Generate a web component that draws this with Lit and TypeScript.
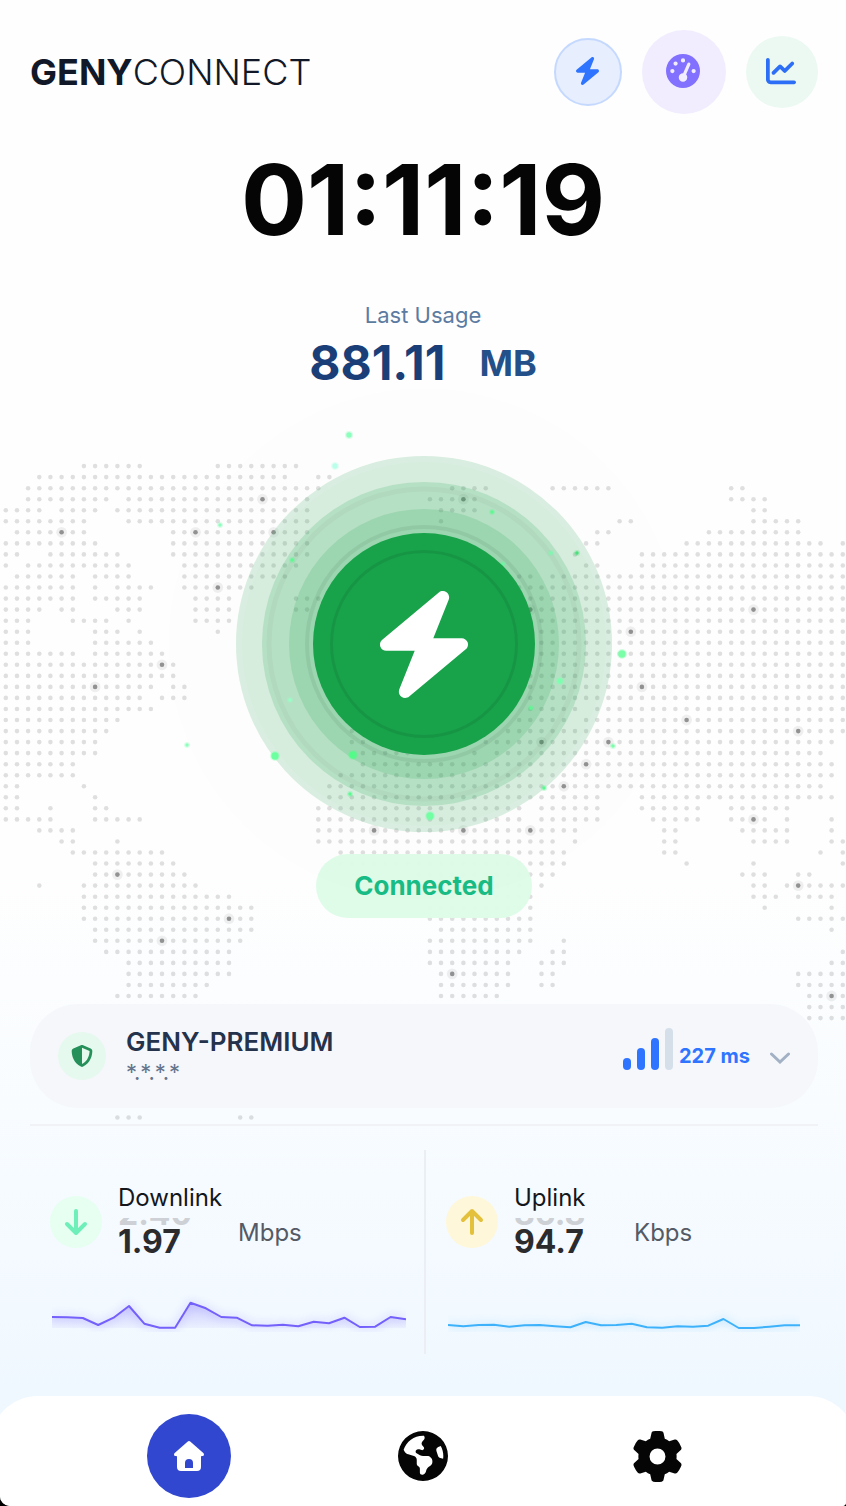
import { LitElement, html, svg, css } from "lit";
import { customElement, property } from "lit/decorators.js";

// Filled column ranges of the dotted world map, one string per row
const MAP_ROWS: Record<number, string> = {
    0: "7-12 19-26",
    1: "3-25 28-29",
    2: "2-28 40-43 49-54 65-66",
    3: "2-9 11-27 38-42 65-68",
    4: "0-3 5-8 10-27 39-42 67-68",
    5: "0-7 11-27 39 55-56 67-71",
    6: "1-7 15-27 53-54 63-71",
    7: "0-8 15-27 52-53 61-73 75",
    8: "0-1 4-10 15-27 51 57-75",
    9: "0 2-11 16-26 52-53 57-75",
    10: "1-6 8-11 16-25 46-47 49-75",
    11: "0-6 8 10-13 16-22 46-75",
    12: "0-6 8-12 17-20 26-28 46-75",
    13: "0-3 5-6 10-12 17-20 26-27 46-75",
    14: "0-2 6-9 11 17-20 47-75",
    15: "0-2 8-10 12 19 47-75",
    16: "0-2 8-13 47-75",
    17: "0-6 8-14 47-75",
    18: "0-15 47-75",
    19: "0-15 47-75",
    20: "0-13 15-16 47-75",
    21: "0-12 14-16 47-75",
    22: "0-13 47-51 53-75",
    23: "0-10 46-50 52-75",
    24: "0-9 31 45-75",
    25: "0-8 31-32 43-74",
    26: "0-8 32-36 42 44-73",
    27: "0-6 32-74",
    28: "0-6 30-74",
    29: "0-1 7 29-73",
    30: "0-1 8 29-53 57-74",
    31: "0-1 4 8-9 28-46 48-53 57-62 65-70",
    32: "0-4 8-12 28-46 48-53 58-62 65-68 70 74",
    33: "3-6 28-51 59-60 66-70 74",
    34: "5-6 10 28-49 51 59-60 67-70 74-75",
    35: "6-14 30-50 59-60 73 75",
    36: "8-15 30-50 61 67 75",
    37: "8-16 37-49 66-68 71-72",
    38: "3 7-17 37-46 48 67-68 70-75",
    39: "7-20 38-47 67-69 71-74",
    40: "7-22 38-47 68 74",
    41: "7-22 38-47 71-75",
    42: "8-22 39-47 74",
    43: "8-21 38-47 50",
    44: "9-20 38-46 49-50 75",
    45: "11-20 38-45 48-50 74-75",
    46: "11-20 39-45 48-49 71-75",
    47: "11-18 39-45 48-49 71-75",
    48: "10-17 39-44 72-75",
    49: "72-75",
    50: "72-75",
    59: "10-12 21-22",
};

// Server locations: column, row
const NODES = [
    [23, 3], [41, 3], [5, 6], [17, 6], [24, 6], [19, 11], [47, 13], [67, 13],
    [56, 15], [14, 18], [8, 20], [57, 20], [61, 23], [71, 24], [48, 25],
    [54, 25], [52, 27], [50, 29], [67, 32], [33, 33], [41, 33], [47, 33],
    [10, 37], [71, 38], [20, 41], [14, 43], [40, 46], [74, 48],
];

// Particles around the power button: x, y, radius, colour
const PARTICLES: [number, number, number, string][] = [
    [-75, -209, 3, "#8dffbd"],
    [-89, -178, 3, "#b9ffe9"],
    [-204, -119, 2, "#8dffbd"],
    [68, -132, 2, "#5dfa92"],
    [-132, -84, 2, "#5dfa92"],
    [79, -80, 2, "#6ef5a4"],
    [127, -91, 2, "#7cf8b0"],
    [153, -91, 2, "#4be07c"],
    [198, 10, 4, "#7affa8"],
    [136, 37, 3, "#7dffb0"],
    [107, 64, 2, "#5dfa92"],
    [-134, 56, 2, "#96ffc6"],
    [-149, 112, 4, "#6cffa0"],
    [-71, 111, 4, "#55fb88"],
    [-74, 150, 2, "#5dfa92"],
    [6, 172, 4, "#72ffa4"],
    [120, 144, 2, "#5dfa92"],
    [189, 102, 2, "#7affa8"],
    [-237, 101, 2, "#8dffbd"],
];

const BOLT =
    "M338.8-9.9c11.9 8.6 16.3 24.2 10.9 37.8L271.3 224 416 224c13.5 0 25.5 8.4 30.1 21.1s.7 26.9-9.6 35.5l-288 240c-11.3 9.4-27.4 9.9-39.3 1.3s-16.3-24.2-10.9-37.8L176.7 288 32 288c-13.5 0-25.5-8.4-30.1-21.1s-.7-26.9 9.6-35.5l288-240c11.3-9.4 27.4-9.9 39.3-1.3z";
const GAUGE =
    "M0 256a256 256 0 1 1 512 0A256 256 0 1 1 0 256zM288 96a32 32 0 1 0 -64 0 32 32 0 1 0 64 0zM256 416c35.3 0 64-28.7 64-64c0-17.4-6.9-33.1-18.1-44.6L366 161.7c5.3-12.1-.2-26.3-12.3-31.6s-26.3 .2-31.6 12.3L257.9 288c-.6 0-1.3 0-1.9 0c-35.3 0-64 28.7-64 64s28.7 64 64 64zM176 144a32 32 0 1 0 -64 0 32 32 0 1 0 64 0zM96 288a32 32 0 1 0 0-64 32 32 0 1 0 0 64zm352-32a32 32 0 1 0 -64 0 32 32 0 1 0 64 0z";
const CHART =
    "M64 64c0-17.7-14.3-32-32-32S0 46.3 0 64V400c0 44.2 35.8 80 80 80H480c17.7 0 32-14.3 32-32s-14.3-32-32-32H80c-8.8 0-16-7.2-16-16V64zm406.6 86.6c12.5-12.5 12.5-32.8 0-45.3s-32.8-12.5-45.3 0L320 210.7l-57.4-57.4c-12.5-12.5-32.8-12.5-45.3 0l-112 112c-12.5 12.5-12.5 32.8 0 45.3s32.8 12.5 45.3 0L240 221.3l57.4 57.4c12.5 12.5 32.8 12.5 45.3 0l128-128z";
const SHIELD =
    "M256 0c4.6 0 9.2 1 13.4 2.9L457.7 82.8c22 9.3 38.4 31 38.3 57.2c-.5 99.2-41.3 280.7-213.6 363.2c-16.7 8-36.1 8-52.8 0C57.3 420.7 16.5 239.2 16 140c-.1-26.2 16.3-47.9 38.3-57.2L242.7 2.9C246.8 1 251.4 0 256 0zm0 66.8V444.8C394 378 431.1 230.1 432 141.4L256 66.8l0 0z";
const GLOBE =
    "M57.7 193l9.4 16.4c8.3 14.5 21.9 25.2 38 29.8L163 255.7c17.2 4.9 29 20.6 29 38.5v39.9c0 11 6.2 21 16 25.9s16 14.9 16 25.9v39c0 15.6 14.9 26.9 29.9 22.6c16.1-4.6 28.6-17.5 32.7-33.8l2.8-11.2c4.2-16.9 15.2-31.4 30.3-40l8.1-4.6c15-8.5 24.2-24.5 24.2-41.7v-8.3c0-12.7-5.1-24.9-14.1-33.9l-3.9-3.9c-9-9-21.2-14.1-33.9-14.1H257c-11.1 0-22.1-2.9-31.8-8.4l-34.5-19.7c-4.3-2.5-7.6-6.5-9.2-11.2c-3.2-9.6 1.1-20 10.2-24.5l5.9-3c6.6-3.3 14.3-3.9 21.3-1.5l23.2 7.7c8.2 2.7 17.2-.4 21.9-7.5c4.7-7 4.2-16.3-1.2-22.8l-13.6-16.3c-10-12-9.9-29.5 .3-41.3l15.7-18.3c8.8-10.3 10.2-25 3.5-36.7l-2.4-4.2c-3.5-.2-6.9-.3-10.4-.3C163.1 48 84.4 108.9 57.7 193zM464 256c0-36.8-9.6-71.4-26.4-101.5L412 164.8c-15.7 6.3-23.8 23.8-18.5 39.8l16.9 50.7c3.5 10.4 12 18.3 22.6 20.9l29.1 7.3c1.2-9 1.8-18.2 1.8-27.5zM0 256a256 256 0 1 1 512 0A256 256 0 1 1 0 256z";
const GEAR =
    "M495.9 166.6c3.2 8.7 .5 18.4-6.4 24.6l-43.3 39.4c1.1 8.3 1.7 16.8 1.7 25.4s-.6 17.1-1.7 25.4l43.3 39.4c6.9 6.2 9.6 15.9 6.4 24.6c-4.4 11.9-9.7 23.3-15.8 34.3l-4.7 8.1c-6.6 11-14 21.4-22.1 31.2c-5.9 7.2-15.7 9.6-24.5 6.8l-55.7-17.7c-13.4 10.3-28.2 18.9-44 25.4l-12.5 57.1c-2 9.1-9 16.3-18.2 17.8c-13.8 2.3-28 3.5-42.5 3.5s-28.7-1.2-42.5-3.5c-9.2-1.5-16.2-8.7-18.2-17.8l-12.5-57.1c-15.8-6.5-30.6-15.1-44-25.4L83.1 425.9c-8.8 2.8-18.6 .3-24.5-6.8c-8.1-9.8-15.5-20.2-22.1-31.2l-4.7-8.1c-6.1-11-11.4-22.4-15.8-34.3c-3.2-8.7-.5-18.4 6.4-24.6l43.3-39.4C64.6 273.1 64 264.6 64 256s.6-17.1 1.7-25.4L22.4 191.2c-6.9-6.2-9.6-15.9-6.4-24.6c4.4-11.9 9.7-23.3 15.8-34.3l4.7-8.1c6.6-11 14-21.4 22.1-31.2c5.9-7.2 15.7-9.6 24.5-6.8l55.7 17.7c13.4-10.3 28.2-18.9 44-25.4l12.5-57.1c2-9.1 9-16.3 18.2-17.8C227.3 1.2 241.5 0 256 0s28.7 1.2 42.5 3.5c9.2 1.5 16.2 8.7 18.2 17.8l12.5 57.1c15.8 6.5 30.6 15.1 44 25.4l55.7-17.7c8.8-2.8 18.6-.3 24.5 6.8c8.1 9.8 15.5 20.2 22.1 31.2l4.7 8.1c6.1 11 11.4 22.4 15.8 34.3zM256 336a80 80 0 1 0 0-160 80 80 0 1 0 0 160z";

@customElement("world-map")
export class WorldMap extends LitElement {
    static styles = css`
        :host {
            display: block;
        }

        svg {
            display: block;
            width: 100%;
        }

        .dot {
            fill: rgba(0, 0, 0, 0.12);
        }

        .halo {
            fill: rgba(0, 0, 0, 0.06);
        }

        .node {
            fill: rgba(0, 0, 0, 0.3);
        }
    `;

    render() {
        const dots: unknown[] = [];
        for (const [row, ranges] of Object.entries(MAP_ROWS)) {
            for (const range of ranges.split(" ")) {
                const [from, to = from] = range.split("-").map(Number);
                for (let col = from; col <= to; col++) {
                    dots.push(
                        svg`<circle class="dot" cx=${this.x(col)} cy=${this.y(+row)} r="2.3" />`
                    );
                }
            }
        }

        return html`
            <svg viewBox="0 0 846 680" aria-hidden="true">
                ${dots}
                ${NODES.map(
                    ([col, row]) => svg`
                        <circle class="halo" cx=${this.x(col)} cy=${this.y(row)} r="5.4" />
                        <circle class="node" cx=${this.x(col)} cy=${this.y(row)} r="2.3" />
                    `
                )}
            </svg>
        `;
    }

    private x(col: number) {
        return (5.8 + col * 11.16).toFixed(1);
    }

    private y(row: number) {
        return (10.1 + row * 11.04).toFixed(1);
    }
}

@customElement("speed-card")
export class SpeedCard extends LitElement {
    static styles = css`
        :host {
            display: block;
        }

        .top {
            display: flex;
            align-items: center;
            gap: 16px;
            height: 80px;
            margin-top: 32px;
        }

        .badge {
            display: grid;
            place-items: center;
            width: 52px;
            height: 52px;
            border-radius: 50%;
            background: #e6fff0;
            color: #6eeeb9;
        }

        .up .badge {
            background: #fff7d9;
            color: #e3c13c;
        }

        .text {
            padding-bottom: 6px;
        }

        .label {
            margin-bottom: 4px;
            font-size: 24px;
            line-height: 32px;
            color: #14171c;
        }

        .reading {
            display: flex;
            align-items: flex-start;
        }

        .roller {
            display: flex;
            flex-direction: column;
            justify-content: flex-end;
            width: 120px;
            height: 38px;
            overflow: hidden;
            font-size: 32px;
            line-height: 28px;
            font-weight: 700;
            color: #2b2b2e;
        }

        .previous {
            color: #cdd0d4;
        }

        .unit {
            font-size: 24px;
            line-height: 30px;
            color: #555a64;
        }

        .chart {
            margin: 32px 0 0 2px;
            color: #7460fb;
        }

        .chart svg {
            display: block;
            width: 100%;
            height: 38px;
        }

        .up .chart {
            color: #3db2fb;
        }

        .glow,
        .line {
            fill: none;
            stroke: currentColor;
            stroke-width: 2;
            stroke-linejoin: round;
            vector-effect: non-scaling-stroke;
        }

        .glow {
            stroke-width: 6;
            opacity: 0.16;
            filter: blur(4px);
        }

        .area {
            opacity: 0.7;
        }

        .up .area {
            opacity: 0.15;
        }
    `;

    @property() label = "";
    @property() value = "";
    @property() previous = "";
    @property() unit = "";
    @property({ type: Boolean }) up = false;
    @property({ type: Array }) points: number[] = [];

    render() {
        const step = 354 / (this.points.length - 1);
        const line = this.points
            .map((p, i) => `${(i * step).toFixed(1)},${p}`)
            .join(" ");

        return html`
            <div class=${this.up ? "up" : "down"}>
                <div class="top">
                    <span class="badge">
                        <svg
                            width="24"
                            height="28"
                            viewBox="0 0 24 28"
                            fill="none"
                            stroke="currentColor"
                            stroke-width="4"
                            stroke-linecap="round"
                            stroke-linejoin="round"
                        >
                            ${this.up
                                ? svg`<path d="M12 25V3M3 12l9-9 9 9" />`
                                : svg`<path d="M12 3v22M3 16l9 9 9-9" />`}
                        </svg>
                    </span>
                    <div class="text">
                        <div class="label">${this.label}</div>
                        <div class="reading">
                            <div class="roller">
                                <span class="previous">${this.previous}</span>
                                <span>${this.value}</span>
                            </div>
                            <span class="unit">${this.unit}</span>
                        </div>
                    </div>
                </div>
                <div class="chart">
                    <svg viewBox="0 0 354 38" preserveAspectRatio="none">
                        <defs>
                            <linearGradient id="fade" x1="0" y1="0" x2="0" y2="1">
                                <stop offset="0" stop-color="currentColor" stop-opacity="0.45" />
                                <stop offset="1" stop-color="currentColor" stop-opacity="0.08" />
                            </linearGradient>
                        </defs>
                        <polyline class="glow" points=${line} />
                        <polygon class="area" fill="url(#fade)" points="0,34 ${line} 354,34" />
                        <polyline class="line" points=${line} />
                    </svg>
                </div>
            </div>
        `;
    }
}

@customElement("app-root")
export class AppRoot extends LitElement {
    static styles = css`
        :host {
            display: block;
            background: #000;
            font-family: Inter, "Liberation Sans", sans-serif;
        }

        .shell {
            display: flex;
            flex-direction: column;
            min-height: 100vh;
            overflow: hidden;
            border-radius: 0 0 4px 10px;
            background: linear-gradient(#fefefe 58%, #f8fcff 74%, #f0f8ff 92%);
        }

        button {
            display: grid;
            place-items: center;
            padding: 0;
            border: none;
            background: none;
            font: inherit;
            cursor: pointer;
        }

        header {
            display: flex;
            align-items: center;
            justify-content: space-between;
            padding: 30px 28px 0 30px;
        }

        h1 {
            margin: 0;
            font-size: 36px;
            line-height: 44px;
            font-weight: 300;
            color: #111827;
        }

        h1 b {
            font-weight: 700;
        }

        .actions {
            display: flex;
            align-items: center;
            gap: 20px;
        }

        .actions button {
            border-radius: 50%;
        }

        .actions svg {
            margin: 0 2px 2px 0;
        }

        .boost {
            box-sizing: border-box;
            width: 68px;
            height: 68px;
            border: 2px solid #c5d9fe;
            background: #e7eefe;
            color: #2f74ff;
        }

        .speed {
            width: 84px;
            height: 84px;
            background: #f1edfe;
            color: #8271ff;
        }

        .history {
            width: 72px;
            height: 72px;
            background: #ebf9f2;
            color: #2c6ef5;
        }

        .timer {
            margin-top: 36px;
            font-size: 98px;
            line-height: 100px;
            font-weight: 700;
            text-align: center;
            color: #050505;
        }

        .usage {
            margin-top: 50px;
            text-align: center;
        }

        .usage-label {
            font-size: 22px;
            line-height: 30px;
            color: #5c7ba1;
        }

        .usage-value {
            display: flex;
            align-items: center;
            justify-content: center;
            gap: 34px;
            margin-top: 8px;
            font-size: 48px;
            line-height: 50px;
            font-weight: 700;
            color: #1a3f78;
        }

        .usage-unit {
            font-size: 36px;
            color: #235089;
        }

        .stage {
            position: relative;
            isolation: isolate;
            display: flex;
            flex-direction: column;
            align-items: center;
            margin-top: 68px;
            padding: 0 28px 0 30px;
        }

        world-map {
            position: absolute;
            z-index: -1;
            top: 0;
            left: 0;
            width: 100%;
        }

        .power {
            position: relative;
            display: grid;
            place-items: center;
            width: 376px;
            height: 376px;
        }

        .rings {
            position: absolute;
            inset: -72px;
        }

        .toggle {
            position: relative;
            width: 222px;
            height: 222px;
            border-radius: 50%;
            background: #18a34a;
            color: #fff;
        }

        .toggle::before {
            content: "";
            position: absolute;
            inset: 17px;
            border: 3px solid rgba(0, 0, 0, 0.08);
            border-radius: 50%;
        }

        .status {
            margin-top: 22px;
            padding: 0 38px;
            border-radius: 32px;
            background: rgba(220, 252, 231, 0.95);
            font-size: 26px;
            line-height: 64px;
            font-weight: 700;
            color: #1abc86;
        }

        .server {
            display: flex;
            align-items: center;
            box-sizing: border-box;
            width: 100%;
            height: 104px;
            margin-top: 86px;
            padding: 0 28px;
            border-radius: 48px;
            background: #f5f7fb;
            text-align: left;
        }

        .shield {
            display: grid;
            place-items: center;
            width: 48px;
            height: 48px;
            margin-right: 20px;
            border-radius: 50%;
            background: #e6f9ee;
            color: #26905a;
        }

        .server-text {
            flex: 1;
        }

        .server-name {
            display: block;
            font-size: 26px;
            line-height: 32px;
            font-weight: 600;
            color: #25324b;
        }

        .server-ip {
            display: block;
            font-size: 22px;
            line-height: 28px;
            color: #64748b;
        }

        .bars {
            display: flex;
            align-items: flex-end;
            gap: 6px;
            height: 42px;
            margin: 0 6px 14px 0;
        }

        .bar {
            width: 8px;
            border-radius: 4px;
            background: #2f74ff;
        }

        .bar.off {
            background: #d5dfea;
        }

        .ping {
            margin-right: 20px;
            font-size: 20px;
            line-height: 24px;
            font-weight: 700;
            color: #2f74ff;
        }

        .chevron {
            margin-top: 4px;
        }

        .stats {
            display: grid;
            grid-template-columns: 1fr 1fr;
            margin: 16px 28px 42px 30px;
            padding-top: 24px;
            border-top: 2px solid #f0f2f6;
        }

        speed-card {
            height: 204px;
            padding: 0 18px 0 20px;
        }

        speed-card + speed-card {
            border-left: 2px solid #ebeff4;
        }

        nav {
            display: flex;
            align-items: flex-start;
            justify-content: center;
            gap: 150px;
            height: 92px;
            margin: auto -10px 0;
            padding-top: 18px;
            border-radius: 48px 48px 0 0;
            background: #fff;
        }

        nav button {
            width: 84px;
            height: 84px;
            border-radius: 50%;
            color: #050505;
        }

        nav .active {
            background: #3147d0;
            color: #fff;
        }
    `;

    private downlink = [
        23, 23.3, 24, 31, 23.7, 12, 29.7, 33.7, 33.7, 8.7, 14.3, 23, 23.7, 31.3,
        31.7, 30.7, 32.3, 27.7, 29.3, 23.7, 33, 32.7, 23, 25.3,
    ];

    private uplink = [
        31, 32.3, 31, 30.7, 32.7, 31.3, 31, 32.3, 33.3, 28, 31.3, 31, 29.7, 33.3,
        33.7, 32.3, 32.7, 31.7, 25, 34, 34, 32.7, 31.3, 31.3,
    ];

    private signal = [12, 22, 32, 42];

    render() {
        return html`
            <div class="shell">
                <header>
                    <h1><b>GENY</b>CONNECT</h1>
                    <div class="actions">
                        <button class="boost" aria-label="Boost">
                            ${this.icon(BOLT, 23, 28, "0 -16 448 544")}
                        </button>
                        <button class="speed" aria-label="Speed test">
                            ${this.icon(GAUGE, 34, 34)}
                        </button>
                        <button class="history" aria-label="History">
                            ${this.icon(CHART, 30, 30)}
                        </button>
                    </div>
                </header>

                <div class="timer">01:11:19</div>

                <div class="usage">
                    <div class="usage-label">Last Usage</div>
                    <div class="usage-value">
                        <span>881.11</span>
                        <span class="usage-unit">MB</span>
                    </div>
                </div>

                <main class="stage">
                    <world-map></world-map>
                    <div class="power">
                        ${this.renderRings()}
                        <button class="toggle" aria-label="Disconnect">
                            ${this.icon(BOLT, 88, 107, "0 -16 448 544")}
                        </button>
                    </div>
                    <div class="status">Connected</div>

                    <button class="server">
                        <span class="shield">${this.icon(SHIELD, 22, 22)}</span>
                        <span class="server-text">
                            <span class="server-name">GENY-PREMIUM</span>
                            <span class="server-ip">*.*.*.*</span>
                        </span>
                        <span class="bars">
                            ${this.signal.map(
                                (h, i) => html`<span
                                    class="bar ${i === 3 ? "off" : ""}"
                                    style="height: ${h}px"
                                ></span>`
                            )}
                        </span>
                        <span class="ping">227 ms</span>
                        <svg
                            class="chevron"
                            width="20"
                            height="12"
                            viewBox="0 0 20 12"
                            fill="none"
                            stroke="#a3b1c4"
                            stroke-width="3"
                            stroke-linecap="round"
                        >
                            <path d="M1.500 2l8.500 8 8.500-8" />
                        </svg>
                    </button>
                </main>

                <section class="stats">
                    <speed-card
                        label="Downlink"
                        value="1.97"
                        previous="2.40"
                        unit="Mbps"
                        .points=${this.downlink}
                    ></speed-card>
                    <speed-card
                        up
                        label="Uplink"
                        value="94.7"
                        previous="86.8"
                        unit="Kbps"
                        .points=${this.uplink}
                    ></speed-card>
                </section>

                <nav>
                    <button class="active" aria-label="Home">
                        <svg width="30" height="30" viewBox="0 0 30 30" fill="currentColor">
                            <path
                                fill-rule="evenodd"
                                d="M13.500 .7a2.300 2.300 0 0 1 3 0L29.300 12c1.300 1.200 .6 3-1 3.100L27 15.200V26a4 4 0 0 1-4 4H7a4 4 0 0 1-4-4V15.200L1.700 15.100C.1 15-.6 13.200 .7 12zM11 27h8v-5a4 4 0 0 0-8 0z"
                            />
                        </svg>
                    </button>
                    <button aria-label="Locations">${this.icon(GLOBE, 50, 50)}</button>
                    <button aria-label="Settings">${this.icon(GEAR, 51, 51)}</button>
                </nav>
            </div>
        `;
    }

    private icon(path: string, width: number, height: number, box = "0 0 512 512") {
        return html`
            <svg width=${width} height=${height} viewBox=${box} fill="currentColor">
                <path d=${path} />
            </svg>
        `;
    }

    private renderRings() {
        return html`
            <svg class="rings" viewBox="-260 -260 520 520" aria-hidden="true">
                <circle r="256" fill="#000" opacity="0.005" />
                <g fill="#16a34a">
                    <circle r="188" opacity="0.17" />
                    <circle r="162" opacity="0.17" />
                    <circle r="135" opacity="0.16" />
                </g>
                <g fill="none" stroke="#000">
                    <circle r="185" stroke="#fff" stroke-width="6" opacity="0.08" />
                    <circle r="155" stroke-width="5" opacity="0.03" />
                    <circle r="117" stroke-width="4" opacity="0.06" />
                </g>
                ${PARTICLES.map(
                    ([x, y, r, color]) => svg`
                        <circle cx=${x} cy=${y} r=${r + 1} fill=${color} opacity="0.3" />
                        <circle cx=${x} cy=${y} r=${r - 0.3} fill=${color} />
                    `
                )}
            </svg>
        `;
    }
}
